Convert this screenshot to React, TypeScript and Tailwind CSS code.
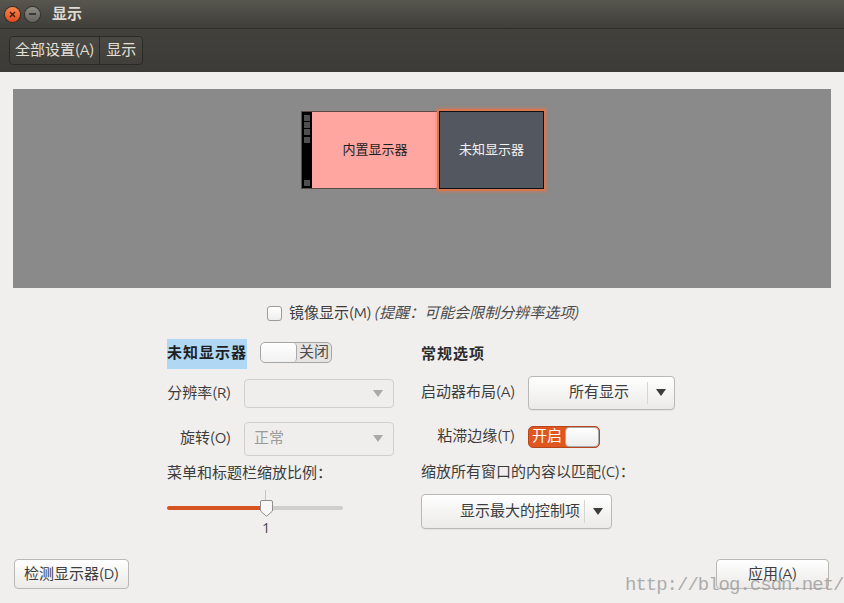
const font = "font-['Ubuntu','Noto_Sans_CJK_SC','Noto_Sans',sans-serif]";

function Arrow({ muted = false }: { muted?: boolean }) {
    return (
        <svg width="10" height="7" viewBox="0 0 10 7">
            <path d="M0 0 L10 0 L5 7 Z" fill={muted ? "#a9a9a9" : "#3c3c3c"} />
        </svg>
    );
}

function Toggle({ on }: { on: boolean }) {
    if (on) {
        return (
            <div className="flex h-[22px] w-[72px] items-stretch overflow-hidden rounded-[5px] border border-[#b5461c] bg-[#e0561f]">
                <span className="flex w-[36px] items-center justify-center text-[15px] text-white">开启</span>
                <span className="flex-1 rounded-[4px] border border-[#a9a9a9] bg-gradient-to-b from-white to-[#ececec]" />
            </div>
        );
    }
    return (
        <div className="flex h-[21px] w-[72px] items-stretch overflow-hidden rounded-[5px] border border-[#a5a5a5] bg-[#e6e4e1]">
            <span className="w-[36px] rounded-[4px] border-r border-[#a9a9a9] bg-gradient-to-b from-white to-[#f1f1f1]" />
            <span className="flex flex-1 items-center justify-center text-[15px] text-[#4c4c4c]">关闭</span>
        </div>
    );
}

function Combo({ value, height }: { value?: string; height: string }) {
    return (
        <div
            className={`flex w-[150px] items-center justify-between rounded-[4px] border border-[#d0cfcc] bg-[#efeeec] pl-[9px] pr-[10px] ${height}`}
        >
            <span className="text-[15px] text-[#9a9a9a]">{value}</span>
            <Arrow muted />
        </div>
    );
}

function DropButton({ label, width, height, pad }: { label: string; width: string; height: string; pad: string }) {
    return (
        <div
            className={`flex items-stretch rounded-[4px] border border-[#b9b8b5] bg-gradient-to-b from-white to-[#ebeae8] shadow-[0_1px_0_rgba(0,0,0,0.05)] ${width} ${height}`}
        >
            <span className={`flex flex-1 items-center justify-end whitespace-nowrap text-[15px] text-[#3c3c3c] ${pad}`}>{label}</span>
            <span className="my-[5px] w-px bg-[#d6d5d2]" />
            <span className="flex w-[26px] items-center justify-center">
                <Arrow />
            </span>
        </div>
    );
}

export default function App() {
    return (
        <div className={`relative flex h-[603px] w-[844px] flex-col overflow-hidden bg-[#f0efed] ${font}`}>
            {/* Title bar */}
            <div className="flex h-[28px] items-center bg-gradient-to-b from-[#57564f] to-[#3f3e39] pl-[5px]">
                <div className="flex h-[15px] w-[15px] items-center justify-center rounded-full bg-gradient-to-b from-[#f7874f] to-[#e0481c] shadow-[0_0_0_1px_#3a2a22]">
                    <svg width="7" height="7" viewBox="0 0 7 7">
                        <path d="M1 1 L6 6 M6 1 L1 6" stroke="#3b1f14" strokeWidth="1.4" />
                    </svg>
                </div>
                <div className="ml-[5px] flex h-[15px] w-[15px] items-center justify-center rounded-full bg-gradient-to-b from-[#8c8b86] to-[#64635e] shadow-[0_0_0_1px_#33322e]">
                    <span className="h-[1.5px] w-[7px] bg-[#3a3936]" />
                </div>
                <span className="ml-[12px] text-[15px] font-bold text-[#dfdbd2]">显示</span>
            </div>

            {/* Toolbar */}
            <div className="flex h-[44px] items-center bg-gradient-to-b from-[#42413c] to-[#3c3b37] pl-[9px] shadow-[inset_0_1px_0_#2f2e2a]">
                <div className="flex h-[29px] items-stretch overflow-hidden rounded-[4px] border border-[#2b2a27] bg-gradient-to-b from-[#4a4944] to-[#403f3a] text-[15px] text-[#e4e0d8]">
                    <span className="flex items-center px-[5px]">全部设置(A)</span>
                    <span className="w-px bg-[#2b2a27]" />
                    <span className="flex items-center px-[6px]">显示</span>
                </div>
            </div>

            {/* Content */}
            <div className="flex flex-1 flex-col pt-[17px]">
                {/* Arrangement panel */}
                <div className="mx-[13px] h-[199px] bg-[#8a8a8a] pt-[22px]">
                    <div className="flex justify-center pl-[1px]">
                        <div className="flex h-[78px] w-[138px] border border-[#5e4a48] bg-[#ffa6a1]">
                            <div className="flex w-[10px] flex-col items-center bg-black pt-[2px]">
                                <span className="mt-[1px] h-[6px] w-[6px] bg-[#4f4f4f]" />
                                <span className="mt-[1px] h-[6px] w-[6px] bg-[#4f4f4f]" />
                                <span className="mt-[1px] h-[6px] w-[6px] bg-[#4f4f4f]" />
                                <span className="mt-[2px] h-[6px] w-[6px] bg-[#4f4f4f]" />
                                <span className="mt-auto mb-[2px] h-[6px] w-[6px] bg-[#4f4f4f]" />
                            </div>
                            <span className="flex flex-1 items-center justify-center text-[13px] text-[#1e1e1e]">内置显示器</span>
                        </div>
                        <div className="flex h-[78px] w-[105px] items-center justify-center border border-[#111] bg-[#535860] text-[13px] text-[#f2f2f2] shadow-[0_0_0_2px_#d8774f,0_0_3px_3px_rgba(230,120,80,0.5)]">
                            未知显示器
                        </div>
                    </div>
                </div>

                {/* Mirror */}
                <div className="mt-[14px] flex items-center justify-center pl-[2px] text-[15px] text-[#3c3c3c]">
                    <span className="mr-[7px] h-[15px] w-[15px] rounded-[3px] border border-[#9c9b98] bg-gradient-to-b from-white to-[#eeeeee]" />
                    <span>镜像显示(M)</span>
                    <span className="ml-[3px] italic text-[#4a4a4a]">(提醒：可能会限制分辨率选项)</span>
                </div>

                {/* Settings columns */}
                <div className="mt-[14px] flex pl-[167px]">
                    {/* Left */}
                    <div className="flex w-[254px] flex-col">
                        <div className="flex h-[30px] items-center">
                            <span className="flex h-[30px] w-[80px] items-center bg-[#b0d8f5] text-[15px] font-bold tracking-[1px] text-[#1f1f1f]">
                                未知显示器
                            </span>
                            <span className="ml-[13px] mt-[-2px]">
                                <Toggle on={false} />
                            </span>
                        </div>
                        <div className="mt-[10px] flex h-[29px] items-center">
                            <span className="w-[64px] whitespace-nowrap text-right text-[15px] text-[#3c3c3c]">分辨率(R)</span>
                            <span className="ml-[13px]">
                                <Combo height="h-[29px]" />
                            </span>
                        </div>
                        <div className="mt-[14px] flex h-[34px] items-center">
                            <span className="w-[64px] whitespace-nowrap text-right text-[15px] text-[#3c3c3c]">旋转(O)</span>
                            <span className="ml-[13px]">
                                <Combo value="正常" height="h-[34px]" />
                            </span>
                        </div>
                        <div className="mt-[8px] flex h-[20px] items-center text-[15px] text-[#3c3c3c]">菜单和标题栏缩放比例：</div>
                        <div className="relative mt-[14px] flex h-[20px] w-[176px] items-center">
                            <span className="h-[4px] w-[99px] rounded-l-full bg-[#d5541f]" />
                            <span className="h-[4px] flex-1 rounded-r-full bg-[#cfcecc]" />
                            <span className="absolute left-[98px] top-[-8px] h-[10px] w-px bg-[#c4c4c4]" />
                            <svg className="absolute left-[93px] top-[2px]" width="13" height="17" viewBox="0 0 13 17">
                                <path
                                    d="M2 0.5 H11 A1.5 1.5 0 0 1 12.5 2 V11 L6.5 16.3 L0.5 11 V2 A1.5 1.5 0 0 1 2 0.5 Z"
                                    fill="#f7f7f7"
                                    stroke="#8e8e8e"
                                />
                            </svg>
                        </div>
                        <span className="ml-[95px] mt-[2px] text-[14px] leading-[16px] text-[#3c3c3c]">1</span>
                    </div>

                    {/* Right */}
                    <div className="flex flex-col">
                        <div className="flex h-[30px] items-center pt-[2px] text-[15px] font-bold tracking-[1px] text-[#2c2c2c]">常规选项</div>
                        <div className="mt-[7px] flex h-[34px] items-center">
                            <span className="w-[94px] whitespace-nowrap text-right text-[15px] text-[#3c3c3c]">启动器布局(A)</span>
                            <span className="ml-[13px]">
                                <DropButton label="所有显示" width="w-[147px]" height="h-[34px]" pad="pr-[18px]" />
                            </span>
                        </div>
                        <div className="mt-[16px] flex h-[22px] items-center">
                            <span className="w-[94px] whitespace-nowrap text-right text-[15px] text-[#3c3c3c]">粘滞边缘(T)</span>
                            <span className="ml-[13px]">
                                <Toggle on />
                            </span>
                        </div>
                        <div className="mt-[15px] flex h-[20px] items-center whitespace-nowrap text-[15px] text-[#3c3c3c]">缩放所有窗口的内容以匹配(C)：</div>
                        <div className="mt-[11px]">
                            <DropButton label="显示最大的控制项" width="w-[191px]" height="h-[35px]" pad="pr-[4px]" />
                        </div>
                    </div>
                </div>

                {/* Bottom buttons */}
                <div className="mt-auto flex justify-between pb-[14px] pl-[14px] pr-[15px]">
                    <button className="flex h-[30px] w-[115px] items-center justify-center rounded-[4px] border border-[#b9b8b5] bg-gradient-to-b from-white to-[#ebeae8] text-[15px] text-[#3c3c3c]">
                        检测显示器(D)
                    </button>
                    <button className="flex h-[30px] w-[113px] items-center justify-center rounded-[4px] border border-[#b9b8b5] bg-gradient-to-b from-white to-[#ebeae8] text-[15px] text-[#3c3c3c]">
                        应用(A)
                    </button>
                </div>
            </div>

            {/* Watermark */}
            <span className="absolute left-[625px] top-[576px] font-['Liberation_Mono',monospace] text-[19px] leading-[19px] tracking-[-1px] text-[#9a9a9a]/80">
                http://blog.csdn.net/
            </span>
        </div>
    );
}
